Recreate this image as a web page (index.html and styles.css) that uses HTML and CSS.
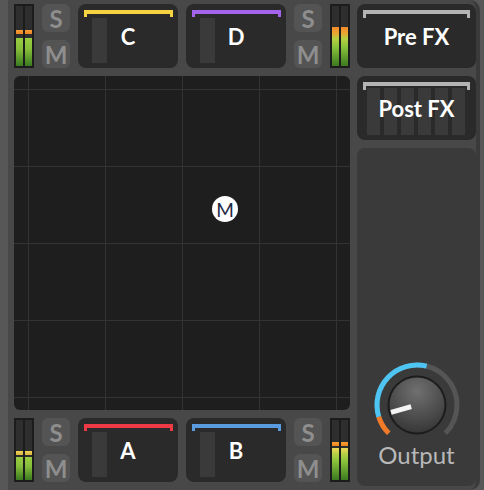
FILE: index.html
```html
<!DOCTYPE html>
<html>
<head>
<meta charset="utf-8">
<link rel="stylesheet" href="styles.css">
</head>
<body>
<div class="app">
  <div class="left">
    <div class="row">
      <div class="meter">
        <div class="bar"><div class="peak orange gap4"></div><div class="level green" style="height:28px"></div></div>
        <div class="bar"><div class="peak orange gap4"></div><div class="level green" style="height:28px"></div></div>
      </div>
      <div class="sm"><div class="btn">S</div><div class="btn">M</div></div>
      <div class="tile">
        <div class="bracket yellow"></div>
        <div class="fader"></div>
        <div class="label">C</div>
      </div>
      <div class="tile">
        <div class="bracket purple"></div>
        <div class="fader"></div>
        <div class="label">D</div>
      </div>
      <div class="sm"><div class="btn">S</div><div class="btn">M</div></div>
      <div class="meter">
        <div class="bar"><div class="level hot" style="height:39px"></div></div>
        <div class="bar"><div class="level hot" style="height:39px"></div></div>
      </div>
    </div>
    <div class="pad">
      <div class="puck">M</div>
    </div>
    <div class="row">
      <div class="meter">
        <div class="bar"><div class="peak yellowpk gap2"></div><div class="level green" style="height:23px"></div></div>
        <div class="bar"><div class="peak yellowpk gap2"></div><div class="level green" style="height:23px"></div></div>
      </div>
      <div class="sm"><div class="btn">S</div><div class="btn">M</div></div>
      <div class="tile">
        <div class="bracket red"></div>
        <div class="fader"></div>
        <div class="label">A</div>
      </div>
      <div class="tile">
        <div class="bracket blue"></div>
        <div class="fader"></div>
        <div class="label">B</div>
      </div>
      <div class="sm"><div class="btn">S</div><div class="btn">M</div></div>
      <div class="meter">
        <div class="bar"><div class="peak orange gap2"></div><div class="level warm" style="height:32px"></div></div>
        <div class="bar"><div class="peak orange gap2"></div><div class="level warm" style="height:32px"></div></div>
      </div>
    </div>
  </div>
  <div class="right">
    <div class="fx">
      <div class="bracket grey fxb"></div>
      <div class="label">Pre FX</div>
    </div>
    <div class="fx">
      <div class="stripes"><span></span><span></span><span></span><span></span><span></span><span></span></div>
      <div class="bracket grey fxb"></div>
      <div class="label">Post FX</div>
    </div>
    <div class="output">
      <svg class="knob" width="90" height="90" viewBox="0 0 90 90">
        <defs>
          <radialGradient id="kg" cx="50%" cy="25%" r="75%">
            <stop offset="0" stop-color="#707070"/>
            <stop offset="1" stop-color="#383838"/>
          </radialGradient>
        </defs>
        <path d="M16.72 73.28 A40 40 0 1 1 73.28 73.28" fill="none" stroke="#555555" stroke-width="5"/>
        <path d="M16.72 73.28 A40 40 0 0 1 6.75 56.70" fill="none" stroke="#f07a28" stroke-width="5"/>
        <path d="M6.75 56.70 A40 40 0 0 1 54.68 6.19" fill="none" stroke="#4ec4f2" stroke-width="5"/>
        <circle cx="45" cy="45" r="29.5" fill="#1c1c1c"/>
        <circle cx="45" cy="45" r="27.5" fill="url(#kg)"/>
        <line x1="39.2" y1="46.6" x2="19" y2="52.4" stroke="#f4f4f4" stroke-width="5"/>
      </svg>
      <div class="out-label">Output</div>
    </div>
  </div>
</div>
</body>
</html>
```
FILE: styles.css
```css
html, body {
  margin: 0;
  padding: 0;
}
body {
  width: 484px;
  height: 490px;
  overflow: hidden;
  background: #575757;
  font-family: Lato, "Noto Sans", sans-serif;
}
.app {
  box-sizing: border-box;
  margin-left: 8px;
  width: 472px;
  height: 490px;
  padding: 4px 0 4px 6px;
  border-right: 4px solid #3a3a3a;
  border-radius: 0 10px 10px 0;
  background: #484848;
  display: flex;
  gap: 7px;
  align-items: flex-start;
}
.left {
  width: 336px;
  display: flex;
  flex-direction: column;
  gap: 8px;
}
.right {
  width: 119px;
  height: 482px;
  display: flex;
  flex-direction: column;
  gap: 8px;
}
.row {
  height: 64px;
  display: flex;
  justify-content: space-between;
}
.meter {
  box-sizing: border-box;
  width: 20px;
  height: 64px;
  padding: 2px;
  background: #1c1c1c;
  display: flex;
  gap: 2px;
}
.bar {
  width: 7px;
  background: #2e2e2e;
  display: flex;
  flex-direction: column;
  justify-content: flex-end;
}
.peak { height: 4px; }
.gap4 { margin-bottom: 4px; }
.gap2 { margin-bottom: 2px; }
.orange { background: linear-gradient(#f7a133, #ef8320); }
.yellowpk { background: linear-gradient(#f2d45a, #d9b53a); }
.green { background: linear-gradient(#9acd40, #86bd3a 40%, #3b7a20); }
.hot { background: linear-gradient(#f28a2a, #f0a232 14%, #b8cf42 30%, #8cc43c 50%, #3b7a20); }
.warm { background: linear-gradient(#f0da58, #b9d046 18%, #8cc43c 40%, #3b7a20); }
.sm {
  width: 28px;
  display: flex;
  flex-direction: column;
  gap: 8px;
}
.btn {
  height: 28px;
  border-radius: 6px;
  background: #545454;
  color: #8e8e8e;
  font-weight: 700;
  font-size: 24px;
  display: flex;
  align-items: center;
  justify-content: center;
}
.tile {
  width: 100px;
  height: 64px;
  border-radius: 8px;
  background: #2a2a2a;
  display: grid;
}
.tile > *, .fx > * {
  grid-area: 1 / 1;
}
.bracket {
  align-self: start;
  margin: 6px 5px 0 6px;
  height: 3px;
  border-style: solid;
  border-width: 4px 3px 0 3px;
}
.fxb {
  margin: 6px 6px 0 6px;
  height: 4px;
}
.yellow { border-color: #f5d341; }
.purple { border-color: #a463ec; }
.red { border-color: #ee3a44; }
.blue { border-color: #5a9be0; }
.grey { border-color: #b4b4b4; }
.fader {
  align-self: start;
  justify-self: start;
  margin: 14px 0 0 14px;
  width: 15px;
  height: 45px;
  background: #3a3a3a;
}
.label {
  place-self: center;
  color: #ffffff;
  font-weight: 700;
  font-size: 22px;
}
.fx .label { font-size: 22px; }
.pad {
  position: relative;
  height: 334px;
  border-radius: 6px;
  background-color: #1e1e1e;
  background-image:
    linear-gradient(to right, #333333 1px, transparent 1px),
    linear-gradient(to bottom, #333333 1px, transparent 1px);
  background-size: 77px 100%, 100% 77px;
  background-position: 14px 0, 0 13px;
}
.puck {
  position: absolute;
  left: 198px;
  top: 120px;
  width: 26px;
  height: 26px;
  border-radius: 50%;
  background: #ffffff;
  color: #1d2844;
  font-size: 19px;
  display: flex;
  align-items: center;
  justify-content: center;
}
.fx {
  height: 64px;
  border-radius: 8px;
  background: #2a2a2a;
  display: grid;
}
.stripes {
  align-self: start;
  justify-self: start;
  margin: 12px 0 0 10px;
  height: 47px;
  display: flex;
  gap: 4px;
}
.stripes span {
  width: 13px;
  background: #3a3a3a;
}
.output {
  flex: 1;
  border-radius: 8px;
  background: #3a3a3a;
  display: flex;
  flex-direction: column;
  align-items: center;
  justify-content: flex-end;
  padding-bottom: 19px;
}
.knob {
  display: block;
  margin-bottom: -7px;
}
.out-label {
  color: #b8b8b8;
  font-size: 24px;
  line-height: 24px;
}
```
